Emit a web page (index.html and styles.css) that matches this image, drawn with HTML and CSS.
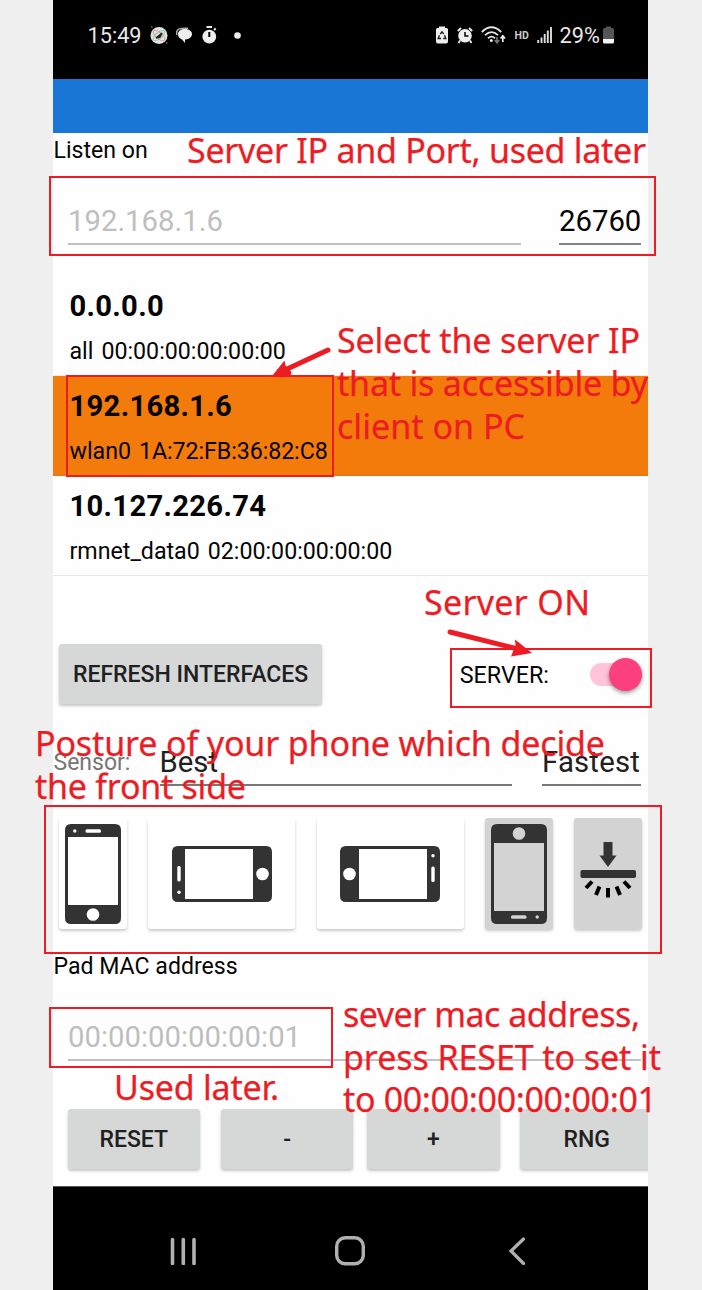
FILE: index.html
```html
<!DOCTYPE html>
<html lang="en">
<head>
<meta charset="utf-8">
<title>Pad server</title>
<link rel="stylesheet" href="styles.css">
</head>
<body>
<main class="page">
  <div class="phone">
    <header class="status">
      <span class="clock">15:49</span>
      <svg class="st-globe" width="18" height="19" viewBox="0 0 18 19"><circle cx="9" cy="9.5" r="8.5" fill="#dfe3e6"/><g fill="none"><ellipse cx="9" cy="9.5" rx="7" ry="3" transform="rotate(40 9 9.5)" stroke="#e58a8a"/><ellipse cx="9" cy="9.5" rx="7" ry="3" transform="rotate(-40 9 9.5)" stroke="#8fc79c"/></g><path d="M6 12l6-5-2 4z" fill="#222" stroke="#222" stroke-width="1.5"/><path d="M1 1h1.500M16 17h1.500" stroke="#b99b4a"/></svg>
      <svg class="st-chat" width="16" height="17" viewBox="0 0 16 17"><path d="M1 8C-1 2 4 .8 12 1.200" fill="none" stroke="#aaa" stroke-width="1.500"/><path d="M9 2c4 0 7 2.300 7 5s-3 5.500-6.500 5.500H9V16l-3-3.500C3 11.500 2 9.500 2 7c0-3 3-5 7-5z" fill="#eee"/></svg>
      <svg class="st-timer" width="15" height="18" viewBox="0 0 15 18"><circle cx="7.300" cy="10.700" r="6.900" fill="#eee"/><path d="M4.500 1h5.500M12 4l1.700-1.500" stroke="#eee" stroke-width="2"/><path d="M7.300 6v5" stroke="#000" stroke-width="2"/></svg>
      <svg class="st-dot" width="7" height="7" viewBox="0 0 7 7"><circle cx="3.500" cy="3.500" r="3.300" fill="#eee"/></svg>
      <span class="grow"></span>
      <svg class="st-recycle" width="12" height="18" viewBox="0 0 12 18"><path d="M3 2V.5h6V2h1.500Q12 2 12 3.500v12Q12 17.500 10 17.500H2Q0 17.500 0 15.500v-12Q0 2 1.500 2z" fill="#eee"/><path d="M4.300 8L6 5.800 7.700 8M8.500 9.300l1.300 3.200H7.200M5 12.500H2.200l1.300-3.200" fill="none" stroke="#222" stroke-width="1.400"/></svg>
      <svg class="st-alarm" width="16" height="17" viewBox="0 0 16 17"><circle cx="8" cy="8.700" r="6.800" fill="#eee"/><path d="M.8 4L4 1M15.200 4L12 1M3 13.500L1.500 16M13 13.500l1.500 2.500" stroke="#eee" stroke-width="1.800"/><path d="M8 5v4h3.500" fill="none" stroke="#000" stroke-width="1.500"/></svg>
      <svg class="st-wifi" width="25" height="18" viewBox="0 0 25 18"><g fill="none" stroke="#e4e4e4" stroke-width="1.800"><path d="M.8 6Q10.500-3.500 20.200 6"/><path d="M4 9.200Q10.500 3 17 9.200"/><path d="M7 12.300q3.500-3.300 7 0"/></g><circle cx="10.300" cy="14.500" r="1.500" fill="#eee"/><path d="M16 11v5M13.800 14l2.200 2.700L18.200 14" fill="none" stroke="#777" stroke-width="1.700"/><path d="M21.800 16v-5M19.600 12.500l2.200-2.700 2.200 2.700" fill="none" stroke="#eee" stroke-width="1.700"/></svg>
      <span class="hd">HD</span>
      <svg class="st-signal" width="15" height="16" viewBox="0 0 15 16"><path d="M1.200 13v3M4.500 10.500V16M7.700 7v9M10.800 3.500V16M14 0v16" stroke="#ddd" stroke-width="1.900"/></svg>
      <span class="percent">29%</span>
      <svg class="st-battery" width="11" height="18" viewBox="0 0 11 18"><path d="M3 2V0.500h5V2h1.500Q11 2 11 4v9H0V4Q0 2 1.500 2z" fill="#555"/><path d="M0 13h11v3q0 1.500-1.500 1.500h-8Q0 17.500 0 16z" fill="#f4f4f4"/></svg>
    </header>
    <div class="appbar"></div>
    <section class="app">
      <div class="label">Listen on</div>
      <div class="row address-row">
        <div class="field muted host">192.168.1.6</div>
        <div class="field port">26760</div>
      </div>
      <ul class="interfaces">
        <li><b>0.0.0.0</b><span>all</span><span>00:00:00:00:00:00</span></li>
        <li class="selected"><b>192.168.1.6</b><span>wlan0</span><span>1A:72:FB:36:82:C8</span></li>
        <li><b>10.127.226.74</b><span>rmnet_data0</span><span>02:00:00:00:00:00</span></li>
      </ul>
      <div class="row tools">
        <div class="button refresh">REFRESH INTERFACES</div>
        <span class="server-label">SERVER:</span>
        <div class="switch"><i></i></div>
      </div>
      <div class="row sensor">
        <span class="sensor-label">Sensor:</span>
        <div class="select best">Best</div>
        <div class="select speed">Fastest</div>
      </div>
      <div class="row postures">
        <div class="card narrow"><svg width="56" height="100" viewBox="0 0 56 100"><use href="#handset"/></svg></div>
        <div class="card wide"><svg width="100" height="56" viewBox="0 0 100 56"><use href="#handset" transform="translate(0 56) rotate(-90)"/></svg></div>
        <div class="card wide"><svg width="100" height="56" viewBox="0 0 100 56"><use href="#handset" transform="translate(100 0) rotate(90)"/></svg></div>
        <div class="card narrow gray"><svg width="56" height="100" viewBox="0 0 56 100"><use href="#handset" transform="rotate(180 28 50)"/></svg></div>
        <div class="card narrow gray"><svg width="56" height="100" viewBox="0 0 56 100"><g fill="#333"><path d="M23.500 18h9v13.500h4L28 43 19.500 31.500h4z"/><rect x=".5" y="46" width="55.500" height="8" rx="1.800"/></g><path d="M12 57.500l-6 6.500M19.500 62.500L16 71M28 64v9.500M36.500 62.500L40 71M44 57.500l6 6.500" stroke="#000" stroke-width="4"/></svg></div>
      </div>
      <div class="label mac-label">Pad MAC address</div>
      <div class="field muted mac">00:00:00:00:00:01</div>
      <div class="row actions">
        <div class="button">RESET</div>
        <div class="button">-</div>
        <div class="button">+</div>
        <div class="button">RNG</div>
      </div>
    </section>
    <nav class="navbar">
      <svg width="28" height="28" viewBox="0 0 28 28"><path d="M3.500 2.500v24M14.300 2.500v24M25 2.500v24" stroke="#b0b0b0" stroke-width="3.600" stroke-linecap="round"/></svg>
      <svg class="home" width="30" height="30" viewBox="0 0 30 30"><rect x="1.700" y="1.700" width="26.600" height="26" rx="8.500" fill="none" stroke="#b0b0b0" stroke-width="3.400"/></svg>
      <svg width="18" height="28" viewBox="0 0 18 28"><path d="M15.500 2L3 14l12.500 12.500" fill="none" stroke="#b0b0b0" stroke-width="3.200" stroke-linecap="round"/></svg>
    </nav>
  </div>

  <svg class="notes" width="702" height="1290" viewBox="0 0 702 1290">
    <defs>
      <g id="handset">
        <path fill="#333" fill-rule="evenodd" d="M6 0h44q6 0 6 6v88q0 6-6 6H6q-6 0-6-6V6Q0 0 6 0zM3 13v68h50V13z"/>
        <circle cx="28" cy="90.500" r="6.300" class="cutout"/>
        <circle cx="9.800" cy="7" r="1.700" class="cutout"/>
        <rect x="20.500" y="5.300" width="15.500" height="3.400" rx="1.500" class="cutout"/>
      </g>
    </defs>
    <g class="frames">
      <rect x="50" y="177" width="605" height="78"/>
      <rect x="67" y="376" width="266" height="100"/>
      <rect x="451" y="649" width="200" height="58"/>
      <rect x="45" y="806" width="616" height="147"/>
      <rect x="50" y="1008" width="282" height="59"/>
    </g>
    <g class="arrows">
      <path d="M328 350L286 369.500M450 632l68 17"/>
      <path class="head" d="M272 376l12.500-15.500 1 5 6 6.500-1 4zM532 653l-17-13.500.5 6-2.500 6-2 5z"/>
    </g>
    <g class="captions">
      <text x="187" y="162.500" textLength="459">Server IP and Port, used later</text>
      <text x="337" y="352.500" textLength="303">Select the server IP</text>
      <text x="337" y="395.500" textLength="311">that is accessible by</text>
      <text x="337" y="438.500" textLength="188">client on PC</text>
      <text x="424" y="614.500" textLength="166">Server ON</text>
      <text x="35" y="755.500" textLength="570">Posture of your phone which decide</text>
      <text x="35" y="798.500" textLength="211">the front side</text>
      <text x="343" y="1026.500" textLength="297">sever mac address,</text>
      <text x="343" y="1069.500" textLength="318">press RESET to set it</text>
      <text x="343" y="1111.500" textLength="314">to 00:00:00:00:00:01</text>
      <text x="114" y="1099.500" textLength="165">Used later.</text>
    </g>
  </svg>
</main>
</body>
</html>
```

FILE: styles.css
```css
* { box-sizing: border-box; }
body { margin: 0; background: #efefef; font-family: Roboto, sans-serif; }
svg { display: block; flex: none; }

.page { position: relative; width: 702px; height: 1290px; overflow: hidden; }
.phone {
  width: 595px; height: 1290px; margin-left: 53px;
  display: flex; flex-direction: column; overflow: hidden;
  background: #fefefe; color: #050505;
}
.row { display: flex; }

/* Status bar */
.status {
  height: 79px; flex: none; display: flex; align-items: center;
  padding: 0 34px 9px 34.500px; background: #000; color: #e8e8e8; font-size: 21.700px;
}
.clock { width: 62px; }
.st-chat { margin-left: 8.500px; }
.st-timer { margin-left: 10px; }
.st-dot { margin-left: 16.500px; }
.grow { flex: 1; }
.st-alarm { margin-left: 9px; }
.st-wifi { margin-left: 8px; }
.hd { margin-left: 9px; width: 22px; font-size: 10.500px; font-weight: 700; color: #ccc; }
.percent { margin-left: 8px; width: 43.500px; }

.appbar { height: 54px; flex: none; background: #1976d5; }

/* Application */
.app { flex: 1; }
.label { height: 34px; line-height: 35px; padding-left: .5px; font-size: 23.100px; white-space: nowrap; }
.address-row { height: 109px; padding: 31px 7px 0 15px; justify-content: space-between; }
.field { height: 47px; line-height: 47px; font-size: 29.300px; border-bottom: 2px solid #7f8381; }
.muted { color: #bfbfbf; border-color: #c0c1c0; }
.host { width: 453px; }
.port { width: 82px; }

.interfaces { margin: 0; padding: 0; list-style: none; }
.interfaces li { height: 100px; padding: 7px 16.500px 0; font-size: 23.200px; border-bottom: 1px solid #e8e8e8; white-space: nowrap; }
.interfaces b { display: block; font-size: 29.200px; line-height: 46px; letter-spacing: .3px; }
.interfaces span { line-height: 45px; margin-right: 8px; }
.interfaces .selected { background: #f37b0b; border-color: #d87824; }
.interfaces .selected span:last-child { letter-spacing: -.07px; }
.interfaces li:first-child { border-color: #ececec; }

.button {
  height: 60px; line-height: 61px; text-align: center;
  background: #d6d8d7; color: #202020; font-size: 23px; font-weight: 500;
  border-radius: 3px; box-shadow: 0 2px 3px rgba(0, 0, 0, .22);
}
.tools { padding: 68px 6px 0 6px; align-items: center; }
.refresh { width: 263.500px; }
.server-label { margin-left: 137.500px; width: 130.500px; font-size: 23.300px; line-height: 62px; height: 60px; }
.switch { width: 52px; height: 23px; border-radius: 12px; background: #ffc4d9; display: flex; align-items: center; justify-content: flex-end; }
.switch i { width: 33px; height: 33px; flex: none; border-radius: 50%; background: #fb3f7f; box-shadow: 0 2px 4px rgba(0, 0, 0, .4); }

.sensor { margin-top: 36px; height: 46px; }
.sensor-label { width: 106.500px; padding-left: .5px; font-size: 23px; line-height: 45px; color: #757575; }
.select { height: 46px; line-height: 45px; font-size: 29.300px; color: #202020; border-bottom: 2px solid #777; }
.best { width: 352.500px; }
.speed { width: 99px; margin-left: 30px; letter-spacing: .2px; }

.postures { margin-top: 32px; padding: 0 6px; justify-content: space-between; }
.card {
  height: 111px; display: flex; align-items: center; justify-content: center;
  background: #fff; border-radius: 3px; box-shadow: 0 2px 3px rgba(0, 0, 0, .2); --hole: #fff;
}
.narrow { width: 68px; }
.wide { width: 147px; }
.gray { background: #d3d3d3; --hole: #d3d3d3; }
.cutout { fill: var(--hole); }

.mac-label { margin-top: 20px; }
.mac { margin: 31px 7px 0 15px; }
.actions { margin: 48px 0 0 14.500px; width: 585.500px; justify-content: space-between; }
.actions .button { width: 132.500px; }
.actions .button:nth-child(2) { margin-left: 7px; }
.actions .button:nth-child(4) { margin-left: 7px; }

/* System navigation */
.navbar {
  height: 104px; flex: none; display: flex; justify-content: space-between; align-items: center;
  padding: 25px 122px 0 116px; background: #000; border-top: 1px solid #555;
}
.home { margin-right: 5px; }

/* Red callouts drawn over the phone */
.notes { position: absolute; left: 0; top: 0; }
.frames { fill: none; stroke: #ed1c24; stroke-width: 2; }
.arrows { fill: none; stroke: #ed1c24; stroke-width: 5; stroke-linecap: round; }
.head { fill: #ed1c24; stroke: none; }
.captions { fill: #ed1c24; stroke: #ed1c24; stroke-width: .25; font-family: "Noto Sans", "Open Sans", sans-serif; font-size: 34px; }
```
